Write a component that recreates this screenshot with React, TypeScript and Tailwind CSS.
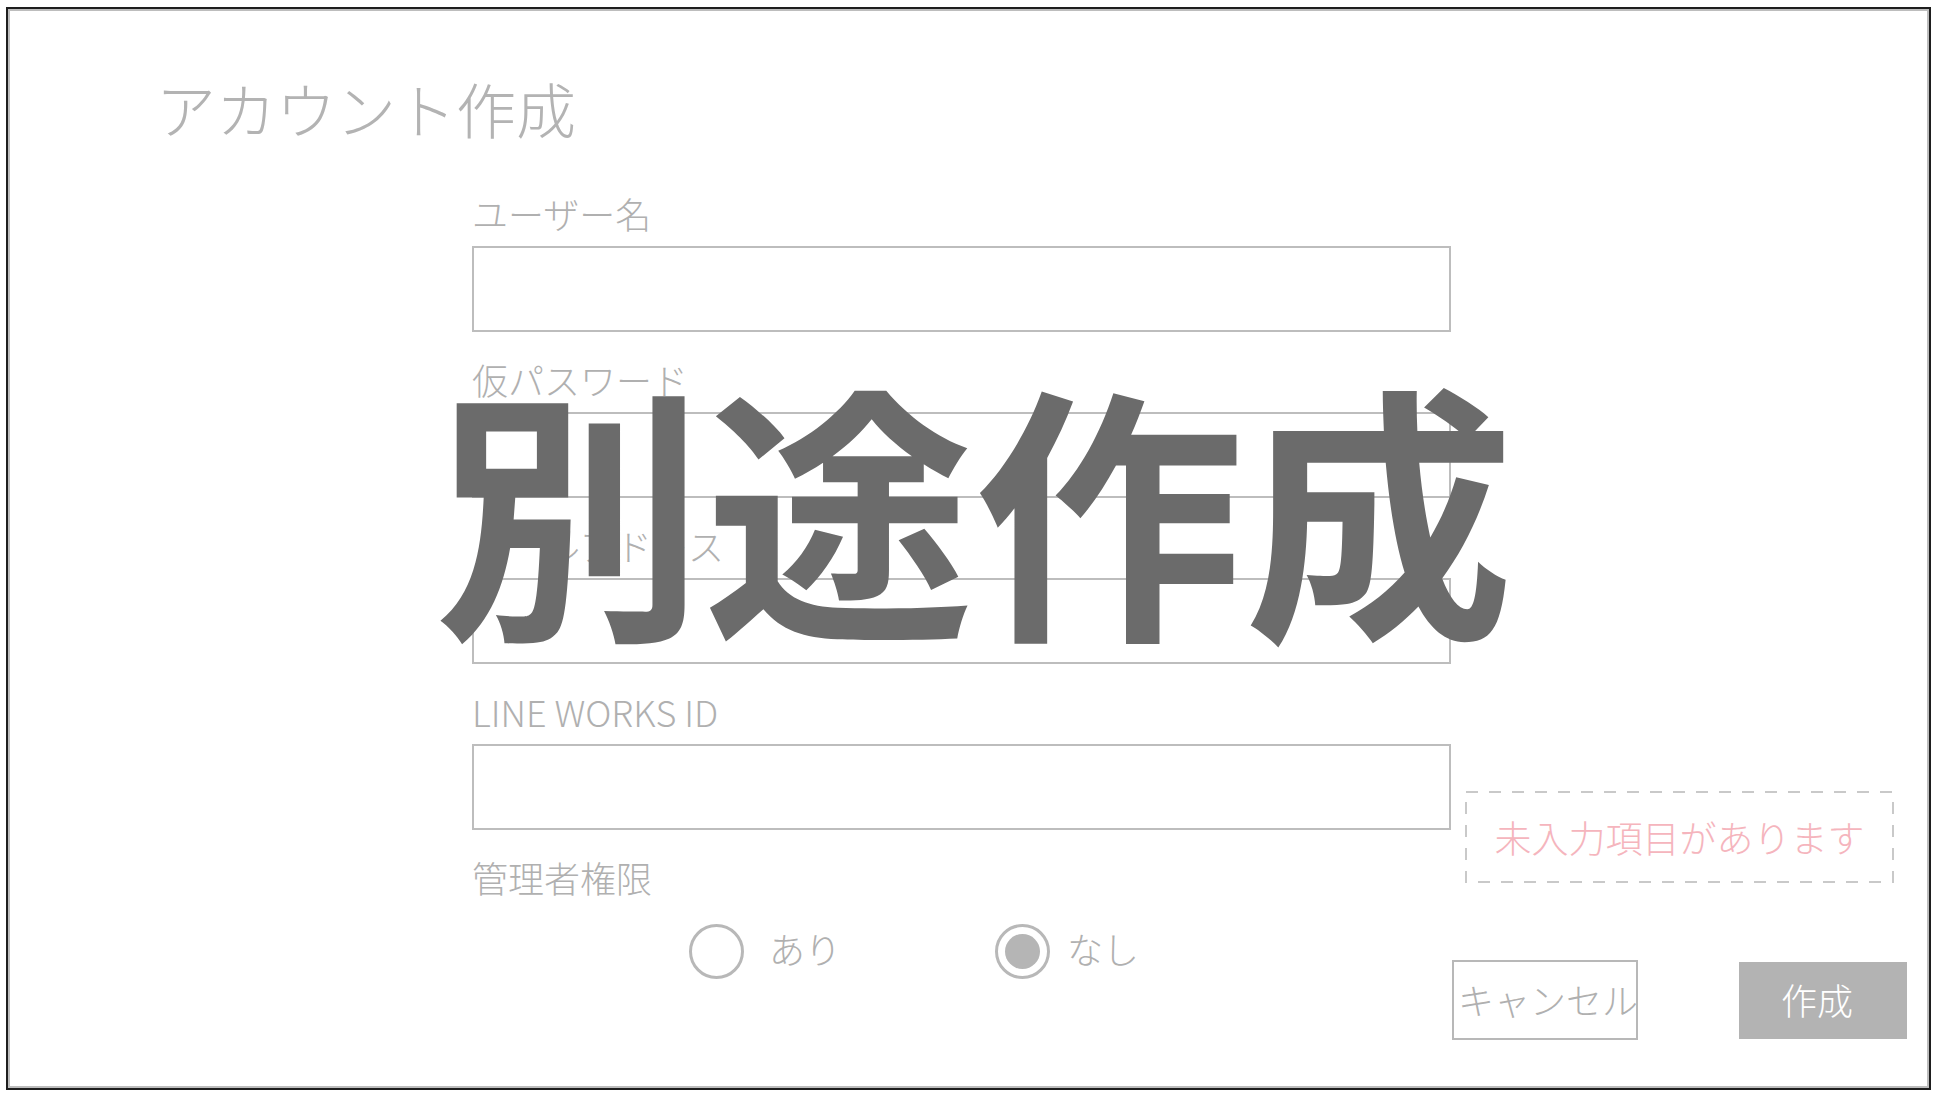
import React from "react";

function Field({ label }: { label: string }) {
  return (
    <div className="flex flex-col mb-[29px]">
      <div className="text-[36px] leading-[36px] font-light text-[#b0b0b0] mb-[15px] whitespace-nowrap">
        {label}
      </div>
      <div className="h-[86px] w-full border-2 border-[#bdbdbd] bg-white" />
    </div>
  );
}

export default function App() {
  return (
    <div className="w-[1938px] h-[1098px] bg-white pl-[6px] pt-[7px] font-['Noto_Sans_CJK_JP','Noto_Sans',sans-serif]">
      <div className="relative w-[1925px] h-[1083px] border-2 border-[#1e1e1e]">
        <div className="h-full w-full border-2 border-[#bdbdbd] flex flex-col">
          <h1 className="pl-[146px] pt-[67px] text-[60px] leading-[60px] font-light text-[#b3b3b3]">
            アカウント作成
          </h1>
          <div className="flex mt-[57px]">
            <div className="ml-[462px] w-[979px] flex flex-col">
              <Field label="ユーザー名" />
              <Field label="仮パスワード" />
              <Field label="メールアドレス" />
              <Field label="LINE WORKS ID" />
              <div className="text-[36px] leading-[36px] font-light text-[#b0b0b0]">
                管理者権限
              </div>
              <div className="flex items-center pl-[217px] mt-[29px]">
                <div className="flex items-center">
                  <div className="w-[55px] h-[55px] rounded-full border-[3px] border-[#b8b8b8]" />
                  <span className="ml-[25px] mb-[8px] text-[36px] leading-[36px] font-light text-[#b0b0b0]">
                    あり
                  </span>
                </div>
                <div className="flex items-center ml-[154px]">
                  <div className="w-[55px] h-[55px] rounded-full border-[3px] border-[#b8b8b8] flex items-center justify-center">
                    <div className="w-[35px] h-[35px] rounded-full bg-[#b5b5b5]" />
                  </div>
                  <span className="ml-[17px] mb-[8px] text-[36px] leading-[36px] font-light text-[#b0b0b0]">
                    なし
                  </span>
                </div>
              </div>
            </div>
            <div className="flex flex-col">
              <div className="relative ml-[14px] mt-[596px] w-[429px] h-[92px] flex items-center justify-center">
                <svg
                  className="absolute inset-0"
                  width="429"
                  height="92"
                  viewBox="0 0 429 92"
                >
                  <rect
                    x="1"
                    y="1"
                    width="427"
                    height="90"
                    fill="none"
                    stroke="#c9c9c9"
                    strokeWidth="2"
                    strokeDasharray="12 11"
                  />
                </svg>
                <span className="relative text-[37px] leading-[37px] font-light text-[#f5b5bd] whitespace-nowrap">
                  未入力項目があります
                </span>
              </div>
              <div className="flex items-start mt-[77px]">
                <div className="ml-[1px] w-[186px] h-[80px] border-2 border-[#b8b8b8] flex items-center pl-[4px] pb-[2px] bg-white">
                  <span className="text-[36px] leading-[36px] font-light text-[#b0b0b0] whitespace-nowrap">
                    キャンセル
                  </span>
                </div>
                <div className="ml-[101px] mt-[2px] w-[168px] h-[77px] bg-[#b3b3b3] flex items-center justify-center pr-[12px] pb-[4px]">
                  <span className="text-[36px] leading-[36px] font-light text-white">
                    作成
                  </span>
                </div>
              </div>
            </div>
          </div>
        </div>
        <div className="absolute left-[426px] top-[359px] text-[270px] leading-[270px] font-bold text-[#6b6b6b] whitespace-nowrap">
          別途作成
        </div>
      </div>
    </div>
  );
}
